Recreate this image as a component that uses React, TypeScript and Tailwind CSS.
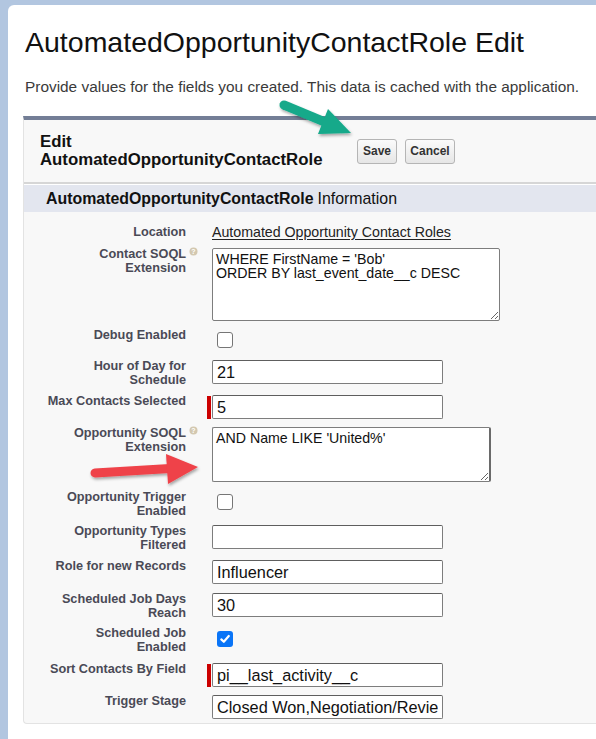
import React from "react";

type Row = {
  label: string[];
  h: string;
  help?: boolean;
  kind: "link" | "textarea" | "checkbox" | "input";
  value?: string;
  required?: boolean;
  checked?: boolean;
  ta?: string;
};

const rows: Row[] = [
  { label: ["Location"], h: "h-[22px]", kind: "link", value: "Automated Opportunity Contact Roles" },
  { label: ["Contact SOQL", "Extension"], h: "h-[81px]", help: true, kind: "textarea", value: "WHERE FirstName = 'Bob'\nORDER BY last_event_date__c DESC", ta: "w-[288px] h-[73px]" },
  { label: ["Debug Enabled"], h: "h-[31px]", kind: "checkbox" },
  { label: ["Hour of Day for", "Schedule"], h: "h-[35px]", kind: "input", value: "21" },
  { label: ["Max Contacts Selected"], h: "h-[32px]", kind: "input", value: "5", required: true },
  { label: ["Opportunity SOQL", "Extension"], h: "h-[64px]", help: true, kind: "textarea", value: "AND Name LIKE 'United%'", ta: "w-[279px] h-[55px] border-r-2 border-r-[#6a6a6a]" },
  { label: ["Opportunity Trigger", "Enabled"], h: "h-[34px]", kind: "checkbox" },
  { label: ["Opportunity Types", "Filtered"], h: "h-[35px]", kind: "input", value: "" },
  { label: ["Role for new Records"], h: "h-[33px]", kind: "input", value: "Influencer" },
  { label: ["Scheduled Job Days", "Reach"], h: "h-[34px]", kind: "input", value: "30" },
  { label: ["Scheduled Job", "Enabled"], h: "h-[36px]", kind: "checkbox", checked: true },
  { label: ["Sort Contacts By Field"], h: "h-[32px]", kind: "input", value: "pi__last_activity__c", required: true },
  { label: ["Trigger Stage"], h: "h-[28px]", kind: "input", value: "Closed Won,Negotiation/Review" },
];

function HelpIcon() {
  return (
    <svg className="absolute right-[-12px] top-[-1px]" width="9" height="9" viewBox="0 0 9 9">
      <circle cx="4.5" cy="4.5" r="4" fill="#d3c8b0" />
      <text x="4.5" y="7.2" fontSize="7" textAnchor="middle" fill="#fff" fontWeight="bold" fontFamily="Liberation Sans, Arial, sans-serif">?</text>
    </svg>
  );
}

function Field({ r }: { r: Row }) {
  if (r.kind === "link") {
    return (
      <div className="text-[14.2px] leading-[13px] text-[#222] underline underline-offset-[2px]">{r.value}</div>
    );
  }
  if (r.kind === "textarea") {
    return (
      <textarea
        readOnly
        value={r.value}
        className={`block resize rounded-[2px] border border-[#7d7d7d] bg-white px-[3px] pt-[3px] text-[14.2px] leading-[14px] text-[#111] outline-none ${r.ta}`}
      />
    );
  }
  if (r.kind === "checkbox") {
    return r.checked ? (
      <div className="ml-[5px] mt-[4px] flex h-[16px] w-[16px] items-center justify-center rounded-[3px] bg-[#0a75f7]">
        <svg width="12" height="12" viewBox="0 0 12 12">
          <path d="M2.3 6.4 L4.8 8.8 L9.8 3" fill="none" stroke="#fff" strokeWidth="2.2" strokeLinecap="round" strokeLinejoin="round" />
        </svg>
      </div>
    ) : (
      <div className="ml-[5px] mt-[3px] h-[16px] w-[16px] rounded-[3px] border border-[#767676] bg-white" />
    );
  }
  return (
    <div className="relative">
      {r.required && <div className="absolute left-[-5px] top-[1px] h-[23px] w-[4px] bg-[#c00]" />}
      <input
        readOnly
        value={r.value}
        className="block h-[24px] w-[231px] rounded-[2px] border border-[#7d7d7d] border-t-[#5e5e5e] bg-white px-[4px] text-[16.3px] leading-[20px] text-[#111] outline-none"
      />
    </div>
  );
}

export default function App() {
  return (
    <div
      className="relative min-h-[739px] overflow-hidden bg-[#b2c6e0] pl-[8px] pt-[5px]"
      style={{ fontFamily: "'Liberation Sans', Arial, sans-serif" }}
    >
      <div className="min-h-[734px] rounded-tl-[6px] bg-white pl-[15px] pt-[22px]">
        <h1 className="ml-[2px] text-[28.5px] leading-[30px] text-[#111]">AutomatedOpportunityContactRole Edit</h1>
        <p className="ml-[2px] mt-[21px] text-[15.4px] leading-[18px] text-[#3a3a3a]">
          Provide values for the fields you created. This data is cached with the application.
        </p>

        <div className="mt-[20px] rounded-bl-[4px] border-b border-l border-t-[4px] border-b-[#e3e3e3] border-l-[#e3e3e3] border-t-[#737e96] bg-[#f8f8f8]">
          <div className="flex h-[62px] items-center pl-[16px]">
            <div className="w-[317px] text-[16.8px] font-bold leading-[18px] text-[#111]">
              <div>Edit</div>
              <div>AutomatedOpportunityContactRole</div>
            </div>
            <div className="flex gap-[8px]">
              <button className="h-[25px] w-[40px] rounded-[3px] border border-[#b5b5b5] bg-gradient-to-b from-[#fbfbfb] to-[#e6e6e6] text-[12px] font-bold text-[#333]">
                Save
              </button>
              <button className="h-[25px] w-[50px] rounded-[3px] border border-[#b5b5b5] bg-gradient-to-b from-[#fbfbfb] to-[#e6e6e6] text-[12px] font-bold text-[#333]">
                Cancel
              </button>
            </div>
          </div>
          <div className="h-[2px] bg-[#d6d6d6]" />
          <div className="h-[1px] bg-white" />
          <div className="flex h-[27px] items-center bg-[#e3e6ef] pl-[22px] text-[15.9px] text-[#111]">
            <span className="font-bold">AutomatedOpportunityContactRole</span>
            <span className="ml-[4px] font-normal">Information</span>
          </div>

          <div className="pt-[14px]">
            {rows.map((r, i) => (
              <div key={i} className={`flex ${r.h}`}>
                <div className="w-[162px] shrink-0 text-right text-[12.7px] font-bold leading-[13.5px] text-[#4a4a56]">
                  {r.label.map((l, j) => (
                    <div key={j} className="relative">
                      {l}
                      {r.help && j === 0 && <HelpIcon />}
                    </div>
                  ))}
                </div>
                <div className="ml-[26px]">
                  <Field r={r} />
                </div>
              </div>
            ))}
          </div>
        </div>
      </div>

      <svg className="pointer-events-none absolute left-0 top-0" width="596" height="739" viewBox="0 0 596 739">
        <defs>
          <filter id="sh" x="-20%" y="-20%" width="140%" height="140%">
            <feDropShadow dx="1" dy="2" stdDeviation="1.5" floodColor="#000" floodOpacity="0.35" />
          </filter>
        </defs>
        <g filter="url(#sh)">
          <line x1="284" y1="105" x2="326" y2="122.5" stroke="#13a98a" strokeWidth="9" strokeLinecap="round" />
          <polygon points="351,133 318,134 328,109" fill="#13a98a" />
        </g>
        <g filter="url(#sh)">
          <line x1="95" y1="473" x2="170" y2="468.5" stroke="#ef4248" strokeWidth="9" strokeLinecap="round" />
          <polygon points="198,467 168,484 166,454" fill="#ef4248" />
        </g>
      </svg>
    </div>
  );
}
